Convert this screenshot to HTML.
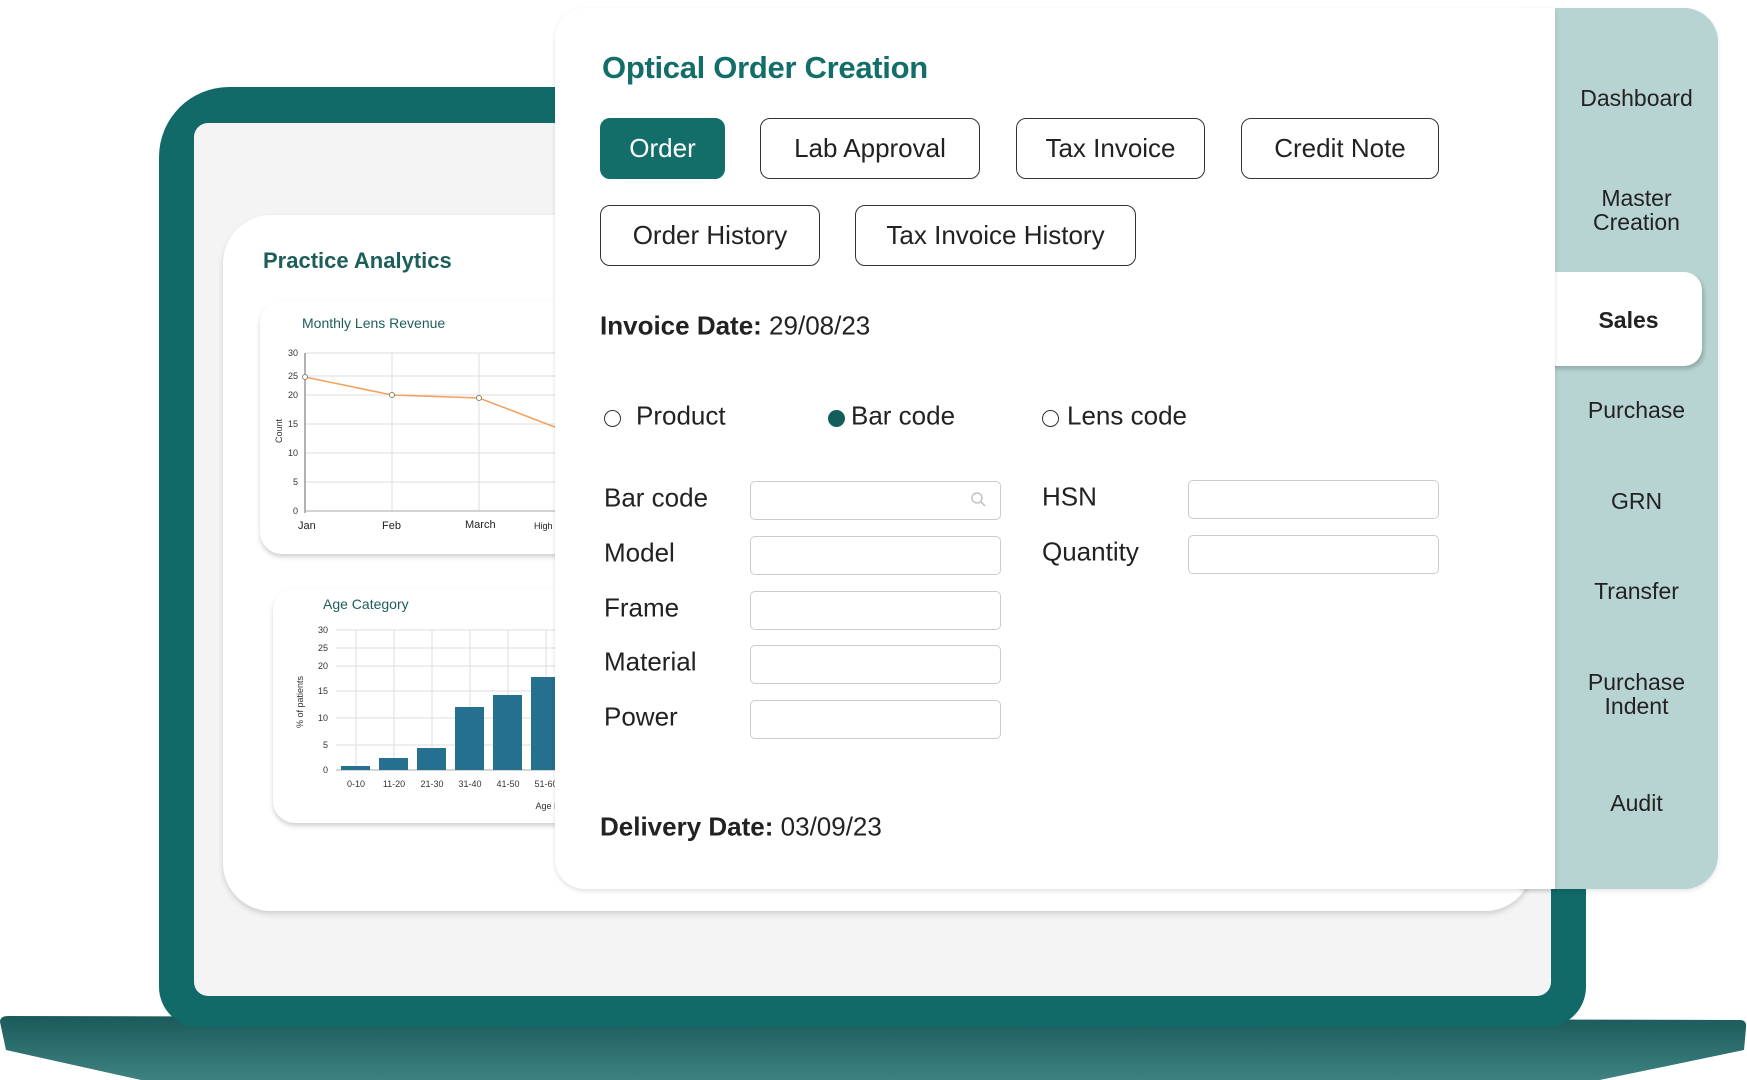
<!DOCTYPE html>
<html><head><meta charset="utf-8">
<style>
*{margin:0;padding:0;box-sizing:border-box}
body{width:1747px;height:1080px;background:#fff;position:relative;overflow:hidden;font-family:"Liberation Sans",sans-serif;color:#111}
.a{position:absolute}
.btn{position:absolute;border:1.5px solid #333;border-radius:10px;font-size:26px;display:flex;align-items:center;justify-content:center;color:#222;background:#fff}
.lbl{position:absolute;font-size:26px;color:#222;transform:translateY(-50%)}
.inp{position:absolute;width:251px;height:39px;border:1.5px solid #ccc;border-radius:5px;background:#fff}
.nav{position:absolute;left:1555px;width:163px;text-align:center;font-size:23px;color:#222;line-height:24px;transform:translateY(-50%)}
.tk{font-size:9px;fill:#333;font-family:"Liberation Sans",sans-serif}
</style></head><body>

<!-- laptop base -->
<svg class="a" style="left:0;top:1010px" width="1747" height="70">
<defs><linearGradient id="g" x1="0" y1="0" x2="0" y2="1"><stop offset="0" stop-color="#1b5a5a"/><stop offset="1" stop-color="#3e8482"/></linearGradient></defs>
<path d="M0,12 Q0,6 8,6 L1740,10 Q1747,10 1746,18 L1744,40 L1590,72 L150,72 L6,40 Z" fill="url(#g)"/>
</svg>
<!-- laptop body -->
<div class="a" style="left:159px;top:87px;width:1427px;height:940px;background:#126a68;border-radius:70px 70px 40px 40px"></div>
<div class="a" style="left:194px;top:123px;width:1357px;height:873px;background:#f4f4f4;border-radius:14px"></div>

<!-- analytics card -->
<div class="a" style="left:223px;top:215px;width:1310px;height:696px;background:#fff;border-radius:48px;box-shadow:0 3px 6px rgba(0,0,0,.15)"></div>
<div class="a" style="left:263px;top:248px;font-size:22px;font-weight:bold;color:#1d5e5a">Practice Analytics</div>

<div class="a" style="left:260px;top:301px;width:330px;height:253px;background:#fff;border-radius:22px;box-shadow:0 3px 5px rgba(0,0,0,.18)"></div>
<svg class="a" style="left:260px;top:301px" width="330" height="253">
<text x="42" y="27" font-size="14" fill="#1d5e5a" font-family="Liberation Sans">Monthly Lens Revenue</text>
<g stroke="#ddd" stroke-width="1">
<line x1="45" y1="52" x2="330" y2="52"/><line x1="45" y1="75" x2="330" y2="75"/><line x1="45" y1="94" x2="330" y2="94"/><line x1="45" y1="123" x2="330" y2="123"/><line x1="45" y1="152" x2="330" y2="152"/><line x1="45" y1="181" x2="330" y2="181"/>
<line x1="132" y1="52" x2="132" y2="210"/><line x1="219" y1="52" x2="219" y2="210"/></g>
<line x1="45" y1="52" x2="45" y2="212" stroke="#666"/><line x1="45" y1="210" x2="330" y2="210" stroke="#aaa"/>
<g class="tk" text-anchor="end"><text x="38" y="55">30</text><text x="38" y="78">25</text><text x="38" y="97">20</text><text x="38" y="126">15</text><text x="38" y="155">10</text><text x="38" y="184">5</text><text x="38" y="213">0</text></g>
<text class="tk" transform="translate(22,130) rotate(-90)" text-anchor="middle" font-size="8">Count</text>
<g font-size="11" fill="#222" font-family="Liberation Sans"><text x="38" y="228">Jan</text><text x="122" y="228">Feb</text><text x="205" y="227">March</text><text x="274" y="228" font-size="9">High</text></g>
<polyline points="45,76 132,94 219,97 300,128" fill="none" stroke="#f5a05a" stroke-width="1.5"/>
<g fill="#fff" stroke="#886" stroke-width="1"><circle cx="45" cy="76" r="2.5"/><circle cx="132" cy="94" r="2.5"/><circle cx="219" cy="97" r="2.5"/></g>
</svg>

<div class="a" style="left:273px;top:588px;width:320px;height:235px;background:#fff;border-radius:22px;box-shadow:0 3px 5px rgba(0,0,0,.18)"></div>
<svg class="a" style="left:273px;top:588px" width="320" height="235">
<text x="50" y="21" font-size="14" fill="#1d5e5a" font-family="Liberation Sans">Age Category</text>
<g stroke="#ddd"><line x1="63" y1="42" x2="320" y2="42"/><line x1="63" y1="60" x2="320" y2="60"/><line x1="63" y1="78" x2="320" y2="78"/><line x1="63" y1="103" x2="320" y2="103"/><line x1="63" y1="130" x2="320" y2="130"/><line x1="63" y1="157" x2="320" y2="157"/>
<line x1="83" y1="42" x2="83" y2="182"/><line x1="121" y1="42" x2="121" y2="182"/><line x1="159" y1="42" x2="159" y2="182"/><line x1="197" y1="42" x2="197" y2="182"/><line x1="235" y1="42" x2="235" y2="182"/><line x1="273" y1="42" x2="273" y2="182"/></g>
<line x1="63" y1="182" x2="320" y2="182" stroke="#aaa"/>
<g class="tk" text-anchor="end" font-size="7"><text x="55" y="45">30</text><text x="55" y="63">25</text><text x="55" y="81">20</text><text x="55" y="106">15</text><text x="55" y="133">10</text><text x="55" y="160">5</text><text x="55" y="185">0</text></g>
<text class="tk" transform="translate(30,114) rotate(-90)" text-anchor="middle" font-size="8">% of patients</text>
<g fill="#25708f"><rect x="68" y="178" width="29" height="4"/><rect x="106" y="170" width="29" height="12"/><rect x="144" y="160" width="29" height="22"/><rect x="182" y="119" width="29" height="63"/><rect x="220" y="107" width="29" height="75"/><rect x="258" y="89" width="29" height="93"/></g>
<g class="tk" font-size="7" text-anchor="middle"><text x="83" y="199">0-10</text><text x="121" y="199">11-20</text><text x="159" y="199">21-30</text><text x="197" y="199">31-40</text><text x="235" y="199">41-50</text><text x="273" y="199">51-60</text><text x="275" y="221">Age D</text></g>
</svg>

<!-- sidebar -->
<div class="a" style="left:1520px;top:8px;width:198px;height:881px;background:#b7d3d2;border-radius:0 34px 34px 0;box-shadow:0 2px 4px rgba(0,0,0,.1)"></div>
<div class="a" style="left:1540px;top:272px;width:162px;height:94px;background:#fff;border-radius:0 18px 18px 0;box-shadow:2px 3px 4px rgba(0,0,0,.2)"></div>
<!-- main panel -->
<div class="a" style="left:555px;top:8px;width:1000px;height:881px;background:#fff;border-radius:30px 0 0 30px;box-shadow:0 2px 5px rgba(0,0,0,.12)"></div>

<div class="nav" style="top:98px">Dashboard</div>
<div class="nav" style="top:210px">Master<br>Creation</div>
<div class="nav" style="top:320px;width:147px;font-weight:bold">Sales</div>
<div class="nav" style="top:410px">Purchase</div>
<div class="nav" style="top:501px">GRN</div>
<div class="nav" style="top:591px">Transfer</div>
<div class="nav" style="top:694px">Purchase<br>Indent</div>
<div class="nav" style="top:803px">Audit</div>

<div class="a" style="left:602px;top:50px;font-size:31px;font-weight:bold;color:#136e6a;letter-spacing:-0.3px">Optical Order Creation</div>

<div class="btn" style="left:600px;top:118px;width:125px;height:61px;background:#136e6a;border-color:#136e6a;color:#fff">Order</div>
<div class="btn" style="left:760px;top:118px;width:220px;height:61px">Lab Approval</div>
<div class="btn" style="left:1016px;top:118px;width:189px;height:61px">Tax Invoice</div>
<div class="btn" style="left:1241px;top:118px;width:198px;height:61px">Credit Note</div>
<div class="btn" style="left:600px;top:205px;width:220px;height:61px">Order History</div>
<div class="btn" style="left:855px;top:205px;width:281px;height:61px">Tax Invoice History</div>

<div class="lbl" style="left:600px;top:326px"><b>Invoice Date:</b> 29/08/23</div>

<div class="a" style="left:604px;top:410px;width:17px;height:17px;border:1.5px solid #333;border-radius:50%"></div>
<div class="lbl" style="left:636px;top:416px">Product</div>
<div class="a" style="left:828px;top:410px;width:17px;height:17px;background:#135e5a;border-radius:50%"></div>
<div class="lbl" style="left:851px;top:416px">Bar code</div>
<div class="a" style="left:1042px;top:410px;width:17px;height:17px;border:1.5px solid #333;border-radius:50%"></div>
<div class="lbl" style="left:1067px;top:416px">Lens code</div>

<div class="lbl" style="left:604px;top:498px">Bar code</div>
<div class="lbl" style="left:604px;top:553px">Model</div>
<div class="lbl" style="left:604px;top:608px">Frame</div>
<div class="lbl" style="left:604px;top:662px">Material</div>
<div class="lbl" style="left:604px;top:717px">Power</div>
<div class="inp" style="left:750px;top:481px"></div>
<svg class="a" style="left:970px;top:491px" width="18" height="18"><circle cx="7" cy="7" r="5" fill="none" stroke="#bbb" stroke-width="1.3"/><line x1="11" y1="11" x2="15" y2="15" stroke="#bbb" stroke-width="1.3"/></svg>
<div class="inp" style="left:750px;top:536px"></div>
<div class="inp" style="left:750px;top:591px"></div>
<div class="inp" style="left:750px;top:645px"></div>
<div class="inp" style="left:750px;top:700px"></div>

<div class="lbl" style="left:1042px;top:497px">HSN</div>
<div class="lbl" style="left:1042px;top:552px">Quantity</div>
<div class="inp" style="left:1188px;top:480px"></div>
<div class="inp" style="left:1188px;top:535px"></div>

<div class="lbl" style="left:600px;top:827px"><b>Delivery Date:</b> 03/09/23</div>
</body></html>
